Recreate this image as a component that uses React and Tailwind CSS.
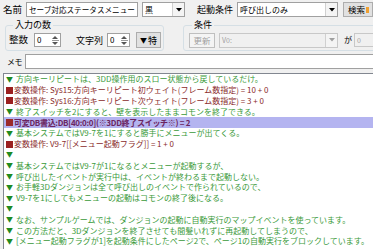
import React from 'react';

const rows = [
  { t: 'c', s: '方向キーリピートは、3DD操作用のスロー状態から戻しているだけ。' },
  { t: 'v', s: '変数操作: Sys15:方向キーリピート初ウェイト(フレーム数指定) = 10 + 0' },
  { t: 'v', s: '変数操作: Sys16:方向キーリピート次ウェイト(フレーム数指定) = 3 + 0' },
  { t: 'c', s: '終了スイッチを2にすると、壁を表示したままコモンを終了できる。' },
  { t: 'h', s: '可変DB書込:DB[40:0:0](※3DD終了スイッチ※) = 2' },
  { t: 'c', s: '基本システムではV9-7を1にすると勝手にメニューが出てくる。' },
  { t: 'v', s: '変数操作: V9-7[[メニュー起動フラグ]] = 1 + 0' },
  { t: 'c', s: '' },
  { t: 'c', s: '基本システムではV9-7が1になるとメニューが起動するが、' },
  { t: 'c', s: '呼び出したイベントが実行中は、イベントが終わるまで起動しない。' },
  { t: 'c', s: 'お手軽3Dダンジョンは全て呼び出しのイベントで作られているので、' },
  { t: 'c', s: 'V9-7を1にしてもメニューの起動はコモンの終了後になる。' },
  { t: 'c', s: '' },
  { t: 'c', s: 'なお、サンプルゲームでは、ダンジョンの起動に自動実行のマップイベントを使っています。' },
  { t: 'c', s: 'この方法だと、3Dダンジョンを終了させても間髪いれずに再起動してしまうので、' },
  { t: 'c', s: '[メニュー起動フラグが1]を起動条件にしたページ2で、ページ1の自動実行をブロックしています。' },
];

// small black (or grey) down arrow inside a combobox button
const DropBtn = ({ disabled }) => (
  <div className="w-[12px] h-full flex items-center justify-center border-l border-[#d0d0d0] bg-[#f4f4f4]">
    <svg width="6" height="4" viewBox="0 0 6 4">
      <path d="M0 0h6L3 3.5z" fill={disabled ? '#a0a0a0' : '#000'} />
    </svg>
  </div>
);

const SpinArrows = ({ disabled }) => (
  <div className="w-[10px] h-full flex flex-col items-center justify-center gap-[1px]">
    <svg width="6" height="3" viewBox="0 0 6 3">
      <path d="M0 3h6L3 0z" fill={disabled ? '#a0a0a0' : '#555'} />
    </svg>
    <div className="w-[7px] h-px bg-[#999]" />
    <svg width="6" height="3" viewBox="0 0 6 3">
      <path d="M0 0h6L3 3z" fill={disabled ? '#a0a0a0' : '#555'} />
    </svg>
  </div>
);

const Row = ({ r }) => {
  if (r.t === 'h') {
    return (
      <div className="h-[10.8px] flex items-center bg-[#b4b4f0] text-[#6b2460] font-semibold tracking-[-0.3px]">
        <span className="w-[7px] h-[7px] bg-[#9b2a2a] ml-[2px] mr-[1px] shrink-0" />
        <span>{r.s}</span>
      </div>
    );
  }
  if (r.t === 'v') {
    return (
      <div className="h-[10.8px] flex items-center text-[#8a2b2b]">
        <span className="w-[7px] h-[7px] bg-[#9b2020] ml-[2px] mr-[1px] shrink-0" />
        <span>{r.s}</span>
      </div>
    );
  }
  return (
    <div className="h-[10.8px] flex items-center text-[#3a9a3a]">
      <span className="ml-[2px] mr-[3px] text-[#1f8a1f] text-[7px]">▼</span>
      <span>{r.s}</span>
    </div>
  );
};

export default function App() {
  return (
    <div className="w-[373px] h-[249px] overflow-hidden bg-[#f0f0f0] text-black font-['Noto_Sans_CJK_JP',sans-serif] leading-none select-none whitespace-nowrap">
      {/* top row */}
      <div className="flex items-center h-[15px] mt-[2px]">
        <span className="ml-[3px] w-[23px] text-[9.5px]">名前</span>
        <div className="w-[112px] h-[15px] flex items-center border border-[#a0a0a0] bg-white pl-[2px] text-[7.6px]">
          セーブ対応ステータスメニュー
        </div>
        <div className="ml-[4px] w-[43px] h-[15px] flex items-center border border-[#a0a0a0] bg-white text-[8px]">
          <span className="flex-1 pl-[2px]">黒</span>
          <DropBtn />
        </div>
        <span className="ml-[12px] text-[9px]">起動条件</span>
        <div className="ml-[4px] w-[101px] h-[15px] flex items-center border border-[#a0a0a0] bg-white text-[8px]">
          <span className="flex-1 pl-[2px]">呼び出しのみ</span>
          <DropBtn />
        </div>
        <div className="ml-[5px] w-[30px] h-[15px] shrink-0 flex items-center border border-[#adadad] bg-[#e1e1e1] text-[8.5px] pl-[4px]">
          <span>検索</span>
          <span className="ml-[1px] w-[3px] h-[6px] bg-[#f0a030]" />
        </div>
      </div>

      {/* group boxes */}
      <div className="flex mt-[3px] h-[31px]">
        <fieldset className="ml-[5px] w-[158px] h-[31px] shrink-0 border border-[#d5dfe5] rounded-[3px] px-[2px]">
          <legend className="ml-[5px] px-[2px] text-[9px] leading-[10px]">入力の数</legend>
          <div className="flex items-center h-[16px] mt-[2px]">
            <span className="ml-[1px] w-[25px] text-[9.5px]">整数</span>
            <div className="w-[27px] h-[14px] flex items-center border border-[#a0a0a0] bg-white text-[8px]">
              <span className="flex-1 pl-[2px]">0</span>
              <SpinArrows />
            </div>
            <span className="ml-[15px] w-[31px] text-[9px]">文字列</span>
            <div className="w-[23px] h-[14px] flex items-center border border-[#a0a0a0] bg-white text-[8px]">
              <span className="flex-1 pl-[2px]">0</span>
              <SpinArrows />
            </div>
            <div className="ml-[6px] w-[25px] h-[16px] flex items-center justify-center border border-[#adadad] bg-[#e1e1e1] text-[9px]">
              <span className="text-[7px] mr-[1px]">▼</span>特
            </div>
          </div>
        </fieldset>
        <fieldset className="ml-[19px] w-[210px] h-[31px] shrink-0 border border-[#d5dfe5] rounded-[3px] px-[5px]">
          <legend className="ml-[3px] px-[2px] text-[9px] leading-[10px]">条件</legend>
          <div className="flex items-center h-[16px] mt-[2px]">
            <div className="w-[26px] h-[15px] flex items-center justify-center border border-[#bfbfbf] bg-[#f4f4f4] text-[8.5px] text-[#a0a0a0]">
              更新
            </div>
            <div className="ml-[4px] w-[119px] h-[15px] flex items-center border border-[#c8c8c8] bg-[#f0f0f0] text-[7px] text-[#a0a0a0]">
              <span className="flex-1 pl-[2px]">V0:</span>
              <DropBtn disabled />
            </div>
            <span className="ml-[6px] text-[8px]">が</span>
            <div className="ml-[2px] w-[28px] h-[14px] flex items-center border border-[#c8c8c8] bg-[#f0f0f0] text-[7px] text-[#a0a0a0]">
              <span className="flex-1 pl-[2px]">0</span>
              <SpinArrows disabled />
            </div>
          </div>
        </fieldset>
      </div>

      {/* memo */}
      <div className="flex items-center mt-[3px] h-[15px]">
        <span className="ml-[7px] w-[18px] shrink-0 text-[8px] tracking-[-0.5px]">メモ</span>
        <div className="w-[360px] h-[15px] shrink-0 border border-[#a0a0a0] bg-white" />
      </div>

      {/* event list */}
      <div className="mt-[4px] ml-[3px] w-[380px] h-[200px] border border-[#828790] bg-white text-[8px] overflow-hidden">
        {rows.map((r, i) => (
          <Row key={i} r={r} />
        ))}
      </div>
    </div>
  );
}
